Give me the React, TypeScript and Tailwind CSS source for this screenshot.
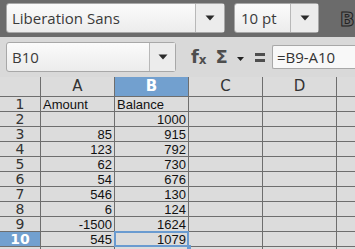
import React from "react";

const Arrow = () => (
  <svg width="10" height="6" viewBox="0 0 10 6">
    <path d="M0.5 0.5 L9.5 0.5 L5 5.5 Z" fill="#2a2a2a" />
  </svg>
);

const rows: [string, string, string][] = [
  ["1", "Amount", "Balance"],
  ["2", "", "1000"],
  ["3", "85", "915"],
  ["4", "123", "792"],
  ["5", "62", "730"],
  ["6", "54", "676"],
  ["7", "546", "130"],
  ["8", "6", "124"],
  ["9", "-1500", "1624"],
  ["10", "545", "1079"],
];

export default function App() {
  const hdr = "font-['DejaVu_Sans',sans-serif] text-[15px] leading-none text-[#333] flex items-center justify-center";
  const rowHdr = "font-['DejaVu_Sans',sans-serif] text-[14px] leading-[14px] text-[#333] flex items-center justify-center overflow-hidden";
  const cell = "bg-[#dcdcdc] font-['Liberation_Sans',sans-serif] text-[13px] leading-none text-[#111] flex items-center px-[2px]";
  return (
    <div className="w-[355px] h-[249px] overflow-hidden bg-[#d9d9d9] flex flex-col">
      {/* top toolbar */}
      <div className="shrink-0 h-[37px] bg-[#6b6b6b] flex items-start pt-[3px] pl-[6px]">
        <div className="w-[219px] h-[30px] rounded-[3px] border border-[#a8a8a8] bg-gradient-to-b from-[#fbfbfb] to-[#ececec] flex">
          <div className="flex-1 flex items-center pl-[5px] font-['Open_Sans',sans-serif] text-[15px] text-[#3a3a3a] border-r border-[#b8b8b8]">
            Liberation Sans
          </div>
          <div className="w-[28px] flex items-center justify-center bg-[#ececec]"><Arrow /></div>
        </div>
        <div className="ml-[9px] w-[85px] h-[30px] rounded-[3px] border border-[#a8a8a8] bg-gradient-to-b from-[#fbfbfb] to-[#ececec] flex">
          <div className="flex-1 flex items-center pl-[6px] font-['Open_Sans',sans-serif] text-[15px] text-[#3a3a3a] border-r border-[#b8b8b8]">
            10 pt
          </div>
          <div className="w-[27px] flex items-center justify-center bg-[#ececec]"><Arrow /></div>
        </div>
        <div className="ml-[21px] mt-[7px] font-['DejaVu_Sans',sans-serif] font-bold text-[19px] leading-none [-webkit-text-stroke:1px_#222] text-[#6b6b6b]">
          B
        </div>
      </div>
      {/* formula toolbar */}
      <div className="shrink-0 h-[40px] bg-[#d9d9d9] flex items-start pl-[6px] pt-[5px]">
        <div className="w-[170px] h-[30px] rounded-[3px] border border-[#a8a8a8] bg-gradient-to-b from-[#fbfbfb] to-[#ececec] flex">
          <div className="flex-1 flex items-center pl-[5px] font-['Open_Sans',sans-serif] text-[15px] text-[#3a3a3a] border-r border-[#b8b8b8]">
            B10
          </div>
          <div className="w-[25px] flex items-center justify-center bg-[#ececec]"><Arrow /></div>
        </div>
        <div className="ml-[15px] mt-[6px] flex items-center h-[18px] text-[#4e4e4e]">
          <span className="font-['DejaVu_Sans',sans-serif] font-bold text-[18px] leading-none">f</span>
          <span className="font-['DejaVu_Sans',sans-serif] font-bold text-[12px] leading-none mt-[6px]">x</span>
          <span className="ml-[9px] font-['DejaVu_Sans',sans-serif] font-bold text-[18px] leading-none">Σ</span>
          <span className="ml-[9px] mt-[3px]"><svg width="7" height="4" viewBox="0 0 7 4"><path d="M0 0 L7 0 L3.5 4 Z" fill="#222" /></svg></span>
          <span className="ml-[11px] flex flex-col gap-[3px]">
            <span className="block w-[10px] h-[3px] bg-[#4e4e4e]" />
            <span className="block w-[10px] h-[3px] bg-[#4e4e4e]" />
          </span>
        </div>
        <div className="ml-[7px] mt-[3px] flex-1 h-[24px] border border-[#a8a8a8] rounded-l-[2px] border-r-0 bg-[#f8f8f8] flex items-center pl-[4px] font-['Open_Sans',sans-serif] text-[15px] text-[#333]">
          =B9-A10
        </div>
      </div>
      {/* grid */}
      <div className="shrink-0 bg-[#6e6e6e] grid grid-cols-[40px_73px_73px_73px_73px_1fr] gap-x-px gap-y-px grid-rows-[19px] auto-rows-[14px]">
        <div className="bg-[#dcdcdc]" />
        <div className={`bg-[#dcdcdc] ${hdr}`}>A</div>
        <div className={`bg-[#72a0cf] ${hdr} !text-white font-bold`}>B</div>
        <div className={`bg-[#dcdcdc] ${hdr}`}>C</div>
        <div className={`bg-[#dcdcdc] ${hdr}`}>D</div>
        <div className="bg-[#dcdcdc]" />
        {rows.map(([n, a, b]) => {
          const sel = n === "10";
          const isText = n === "1";
          return (
            <React.Fragment key={n}>
              <div className={`${sel ? "bg-[#72a0cf] !text-white font-bold" : "bg-[#dcdcdc]"} ${rowHdr}`}>{n}</div>
              <div className={`${cell} ${isText ? "justify-start" : "justify-end"}`}>{a}</div>
              <div className={`${cell} ${isText ? "justify-start" : "justify-end"} relative ${sel ? "outline-2 outline-[#6a9bd0] -outline-offset-1" : ""}`}>
                {b}
                {sel && <span className="absolute right-[-3px] bottom-[-3px] w-[4px] h-[4px] bg-[#6a9bd0]" />}
              </div>
              <div className={cell} />
              <div className={cell} />
              <div className={cell} />
            </React.Fragment>
          );
        })}
        <div className="bg-[#dcdcdc]" />
        <div className={cell} />
        <div className={cell} />
        <div className={cell} />
        <div className={cell} />
        <div className={cell} />
      </div>
    </div>
  );
}
